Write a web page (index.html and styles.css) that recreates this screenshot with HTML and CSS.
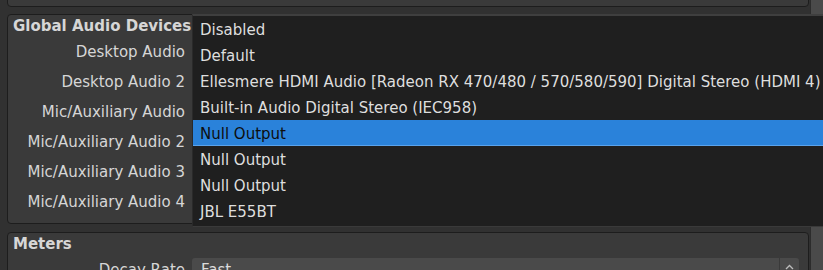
FILE: index.html
```html
<!DOCTYPE html>
<html lang="en">
<head>
    <meta charset="UTF-8">
    <title>Audio Settings</title>
    <link rel="stylesheet" href="styles.css">
</head>
<body>
    <div class="window">
        <div class="content">
            <div class="group group-cut"></div>

            <div class="group">
                <div class="group-title">Global Audio Devices</div>
                <div class="form-row"><label>Desktop Audio</label><div class="combo"></div></div>
                <div class="form-row"><label>Desktop Audio 2</label><div class="combo"></div></div>
                <div class="form-row"><label>Mic/Auxiliary Audio</label><div class="combo"></div></div>
                <div class="form-row"><label>Mic/Auxiliary Audio 2</label><div class="combo"></div></div>
                <div class="form-row"><label>Mic/Auxiliary Audio 3</label><div class="combo"></div></div>
                <div class="form-row"><label>Mic/Auxiliary Audio 4</label><div class="combo"></div></div>
            </div>

            <div class="group">
                <div class="group-title">Meters</div>
                <div class="form-row">
                    <label>Decay Rate</label>
                    <div class="combo">Fast<span class="combo-arrow"><svg width="9" height="6" viewBox="0 0 9 6"><path d="M1 5 L4.5 1.5 L8 5" fill="none" stroke="#bdbdbd" stroke-width="1.3"/></svg></span></div>
                </div>
            </div>
        </div>
        <div class="scrollbar"></div>
    </div>

    <ul class="popup">
        <li>Disabled</li>
        <li>Default</li>
        <li>Ellesmere HDMI Audio [Radeon RX 470/480 / 570/580/590] Digital Stereo (HDMI 4)</li>
        <li>Built-in Audio Digital Stereo (IEC958)</li>
        <li class="selected">Null Output</li>
        <li>Null Output</li>
        <li>Null Output</li>
        <li>JBL E55BT</li>
    </ul>
</body>
</html>
```

FILE: styles.css
```css
body {
    margin: 0;
    background-color: #313131;
    font-family: "DejaVu Sans", Verdana, sans-serif;
    font-size: 15px;
    color: #d6d6d6;
    overflow: hidden;
    height: 270px;
}
.window {
    display: flex;
    height: 270px;
    overflow: hidden;
}
.content {
    flex: 1;
    padding: 0 1px 0 7px;
}
.scrollbar {
    width: 12px;
    background-color: #4a4a4a;
    border-left: 1px solid #2c2c2c;
}
.group {
    background-color: #3a3a3a;
    border: 1px solid #1d1d1d;
    border-radius: 4px;
    margin-bottom: 8px;
    padding: 2px 0 6px 0;
}
.group-cut {
    height: 20px;
    margin-top: -15px;
    margin-bottom: 7px;
    padding: 0;
}
.group-title {
    font-weight: bold;
    padding-left: 5px;
    height: 20px;
    line-height: 18px;
}
.form-row {
    display: flex;
    align-items: center;
    gap: 7px;
    height: 30px;
}
.form-row label {
    width: 177px;
    text-align: right;
}
.combo {
    flex: 1;
    display: flex;
    align-items: center;
    height: 25px;
    margin-right: 9px;
    padding-left: 9px;
    background-color: #4a4a4a;
    border-radius: 3px;
    color: #dcdcdc;
}
.combo-arrow {
    margin-left: auto;
    width: 20px;
    height: 100%;
    border-left: 1px solid #3a3a3a;
    display: flex;
    justify-content: center;
    padding-top: 6px;
    box-sizing: border-box;
}
.popup {
    position: absolute;
    left: 192px;
    top: 14px;
    width: 640px;
    margin: 0;
    padding: 0 0 2px 0;
    list-style: none;
    background-color: #1f1f1f;
    border-top: 2px solid #3f3f3f;
    border-left: 1px solid #2a2a2a;
    border-bottom: 1px solid #3a3a3a;
    color: #dedede;
}
.popup li {
    height: 24px;
    padding-top: 2px;
    line-height: 25px;
    padding-left: 7px;
    white-space: nowrap;
}
.popup li.selected {
    background-color: #2a82da;
    border-bottom: 1px solid #5aa3ec;
    height: 23px;
    color: #0e0e0e;
}
```
